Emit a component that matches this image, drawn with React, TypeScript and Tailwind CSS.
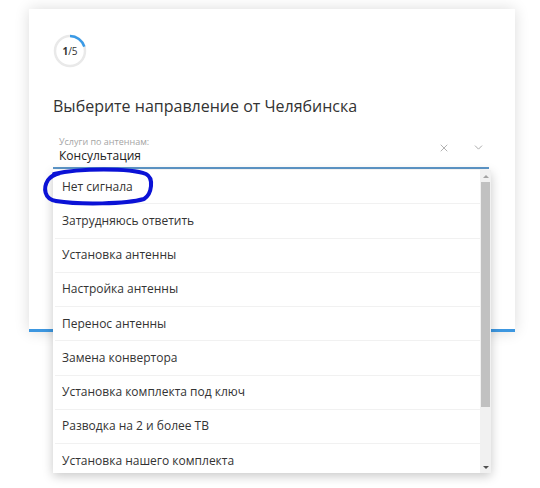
import { X, ChevronDown } from "lucide-react";

const options = [
  "Нет сигнала",
  "Затрудняюсь ответить",
  "Установка антенны",
  "Настройка антенны",
  "Перенос антенны",
  "Замена конвертора",
  "Установка комплекта под ключ",
  "Разводка на 2 и более ТВ",
  "Установка нашего комплекта",
];

function Progress() {
  // ring with 1/5 arc
  const r = 15;
  const c = 2 * Math.PI * r;
  return (
    <div className="relative w-[34px] h-[34px]">
      <svg width="34" height="34" viewBox="0 0 34 34" className="absolute inset-0">
        <circle cx="17" cy="17" r={r} fill="none" stroke="#e9e9e9" strokeWidth="2.5" />
        <circle
          cx="17"
          cy="17"
          r={r}
          fill="none"
          stroke="#3a9ae6"
          strokeWidth="2.5"
          strokeDasharray={`${c / 5} ${c}`}
          transform="rotate(-90 17 17)"
        />
      </svg>
      <div className="absolute inset-0 flex items-center justify-center text-[10px] text-[#333]">
        <span className="font-bold">1</span>/5
      </div>
    </div>
  );
}

export default function App() {
  return (
    <div className="relative w-[540px] h-[488px] bg-white overflow-hidden font-['Open_Sans',sans-serif]">
      {/* Card */}
      <div className="ml-[29px] mt-[9px] w-[486px] h-[323px] bg-white border-b-[3px] border-[#3d97e0] shadow-[0_0_14px_rgba(0,0,0,0.14)] pl-[24px] pr-[26px] pt-[25px]">
        <Progress />
        <h1 className="mt-[26px] text-[16px] text-[#333] leading-[24px]">
          Выберите направление от Челябинска
        </h1>
        <div className="mt-[18px] flex items-end border-b-2 border-[#5d97c9] pb-[3px]">
          <div className="flex-1 flex flex-col pl-[6px]">
            <span className="text-[9px] leading-[12px] text-[#a5a5a5]">Услуги по антеннам:</span>
            <span className="text-[12px] leading-[16px] text-[#222]">Консультация</span>
          </div>
          <div className="flex items-center gap-[22px] pr-[4px] pb-[10px] text-[#a9a9a9]">
            <X size={12} strokeWidth={1.8} />
            <ChevronDown size={13} strokeWidth={1.8} />
          </div>
        </div>
      </div>

      {/* Dropdown menu */}
      <div className="absolute left-[53px] top-[170px] w-[438px] h-[303px] bg-white shadow-[0_3px_10px_rgba(0,0,0,0.22)] flex overflow-hidden">
        <ul className="flex-1 pl-[2px]">
          {options.map((o, i) => (
            <li
              key={o}
              className={`h-[34.25px] flex items-center pl-[7px] text-[12px] text-[#333] ${
                i < options.length - 1 ? "border-b border-[#f1f1f1]" : ""
              }`}
            >
              {o}
            </li>
          ))}
        </ul>
        <div className="w-[11px] bg-[#f1f1f1] flex flex-col items-center">
          <div className="h-[12px] flex items-center justify-center">
            <div className="w-0 h-0 border-x-[3px] border-x-transparent border-b-[3px] border-b-[#a3a3a3]" />
          </div>
          <div className="w-[9px] h-[225px] bg-[#c1c1c1]" />
          <div className="flex-1" />
          <div className="h-[12px] flex items-center justify-center">
            <div className="w-0 h-0 border-x-[3px] border-x-transparent border-t-[3px] border-t-[#505050]" />
          </div>
        </div>
      </div>

      {/* Hand-drawn highlight around first option */}
      <svg className="absolute left-[40px] top-[166px]" width="118" height="42" viewBox="0 0 118 42">
        <path
          d="M14 8 C40 2, 90 2, 106 8 C114 12, 112 28, 104 33 C86 38, 40 39, 16 35 C4 33, 3 22, 8 14 C10 11, 13 9, 20 7"
          fill="none"
          stroke="#0b12d6"
          strokeWidth="4"
          strokeLinecap="round"
        />
      </svg>
    </div>
  );
}
